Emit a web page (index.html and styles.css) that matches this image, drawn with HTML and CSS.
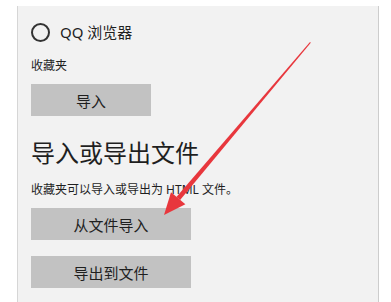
FILE: index.html
```html
<!DOCTYPE html>
<html lang="zh-cn">
<head>
    <meta charset="UTF-8">
    <meta name="viewport" content="width=device-width, initial-scale=1.0">
    <title>导入或导出文件</title>
    <link rel="stylesheet" href="styles.css">
</head>
<body>
    <div class="panel">
        <div class="radio-row">
            <span class="radio"></span>
            <span class="radio-label">QQ 浏览器</span>
        </div>
        <div class="label">收藏夹</div>
        <button class="btn btn-small">导入</button>

        <h2 class="title">导入或导出文件</h2>
        <div class="desc">收藏夹可以导入或导出为 HTML 文件。</div>
        <button class="btn">从文件导入</button>
        <button class="btn btn-last">导出到文件</button>
    </div>

    <svg class="arrow" width="391" height="302" viewBox="0 0 391 302">
        <polygon points="310,42 310.8,42.8 180.1,200.1 176.4,196.9" fill="#e8373d" />
        <polygon points="164,215 185.4,204.2 171,192.2" fill="#e8373d" />
    </svg>
</body>
</html>
```

FILE: styles.css
```css
body {
    margin: 0;
    background-color: #fff;
    font-family: "Noto Sans", "Noto Sans CJK SC", sans-serif;
    color: #1f1f1f;
    height: 302px;
    overflow: hidden;
    position: relative;
}
.panel {
    margin: 6px 12px 0 17px;
    height: 296px;
    box-sizing: border-box;
    background-color: #f2f2f2;
    border-left: 1px solid #d6d6d6;
    border-right: 1px solid #cdcdcd;
    padding: 17px 0 0 13px;
    display: flex;
    flex-direction: column;
    align-items: flex-start;
}
.radio-row {
    display: flex;
    align-items: center;
    height: 19px;
}
.radio {
    width: 15px;
    height: 15px;
    border: 2px solid #333;
    border-radius: 50%;
    margin-right: 10px;
}
.radio-label {
    font-size: 15px;
    line-height: 19px;
}
.label {
    margin-top: 16px;
    font-size: 12px;
    line-height: 16px;
}
.btn {
    width: 160px;
    height: 32px;
    margin-top: 10px;
    border: none;
    padding: 0;
    background-color: #c2c2c2;
    font-family: "Noto Sans", "Noto Sans CJK SC", sans-serif;
    font-size: 15px;
    color: #1f1f1f;
}
.btn-small {
    width: 120px;
}
.btn-last {
    margin-top: 16px;
}
.title {
    margin: 21px 0 0;
    font-size: 24px;
    font-weight: normal;
    line-height: 32px;
}
.desc {
    margin-top: 13px;
    font-size: 12px;
    line-height: 16px;
}
.arrow {
    position: absolute;
    left: 0;
    top: 0;
}
```
